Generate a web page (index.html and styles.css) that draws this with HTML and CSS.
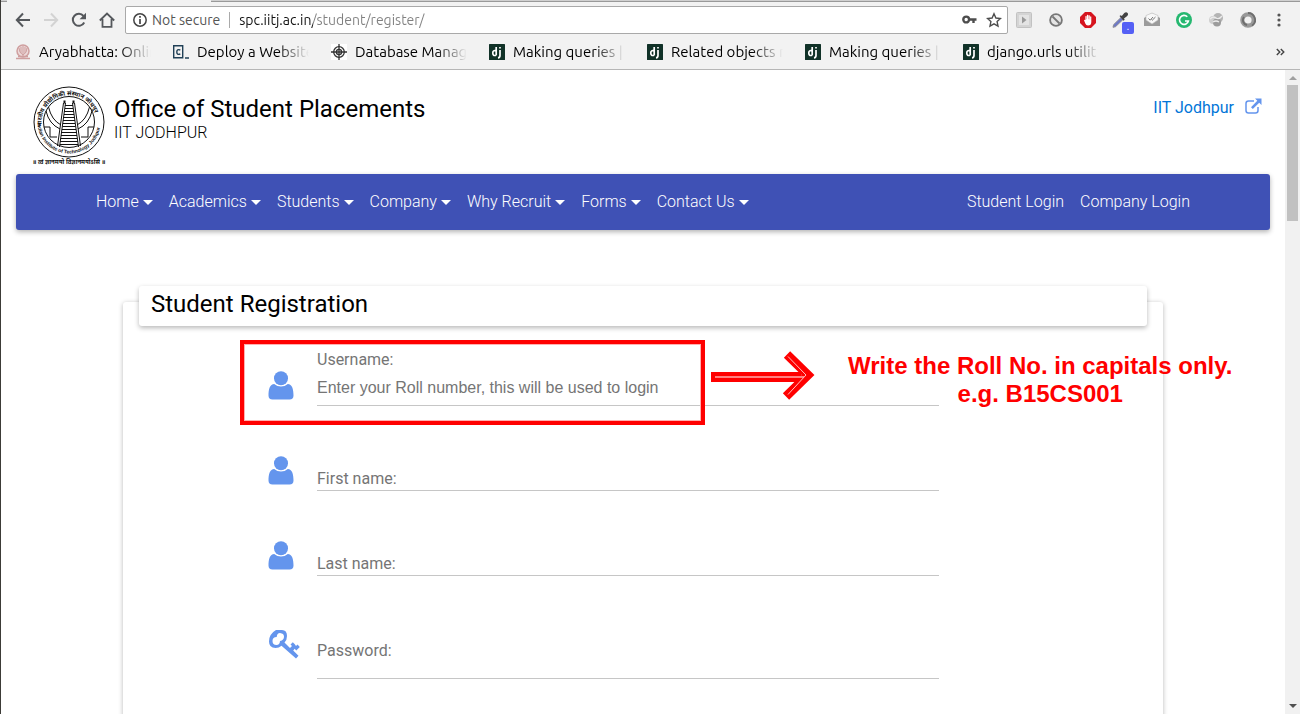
FILE: index.html
```html
<!DOCTYPE html>
<html lang="en">
<head>
<meta charset="utf-8">
<title>Student Registration</title>
<link rel="stylesheet" href="styles.css">
</head>
<body>
<svg class="defs" aria-hidden="true">
  <symbol id="user" viewBox="0 0 26 29"><circle cx="13" cy="7.3" r="7"/><path d="M6.2 13C2 13 .5 18 .5 24.500q0 4 4 4h17q4 0 4-4C25.500 18 24 13 19.800 13q-3 2.600-6.800 2.600T6.200 13z"/></symbol>
  <symbol id="dj" viewBox="0 0 16 16"><rect width="16" height="16" rx=".5" fill="#113228"/><path d="M7.200 3v8.300M7.200 6.800Q3.800 5.800 3.800 9t3.400 2.300M11 6v5.500q0 2.200-2 2.400M11 3v1.600" fill="none" stroke="#fff" stroke-width="1.700"/></symbol>
</svg>
<div class="browser">
  <header class="chrome">
    <div class="tab-edge"><span class="active-tab"></span></div>
    <div class="toolbar">
      <div class="nav-buttons">
        <button aria-label="Back"><svg width="16" height="16" viewBox="0 0 16 16"><path d="M15 8H2M8 1.500 1.800 8 8 14.500" fill="none" stroke="#55585c" stroke-width="2"/></svg></button>
        <button aria-label="Forward"><svg width="16" height="16" viewBox="0 0 16 16"><path d="M1 8h13M8 1.500 14.200 8 8 14.500" fill="none" stroke="#d3d3d3" stroke-width="2"/></svg></button>
        <button aria-label="Reload"><svg width="16" height="16" viewBox="0 0 16 16"><path d="M13.200 10.500A6 6 0 1 1 12.500 4" fill="none" stroke="#55585c" stroke-width="2"/><path d="M15 .8v6.400H8.600z" fill="#55585c"/></svg></button>
        <button aria-label="Home"><svg width="16" height="16" viewBox="0 0 16 16"><path d="M.8 8.500 8 1.500l7.200 7M3.500 7v7.800h9V7" fill="none" stroke="#55585c" stroke-width="1.800"/></svg></button>
      </div>
      <div class="omnibox">
        <svg width="14" height="14" viewBox="0 0 14 14"><circle cx="7" cy="7" r="6.200" fill="none" stroke="#444" stroke-width="1.500"/><path d="M7 3v1.700M7 6v5" stroke="#444" stroke-width="1.700"/></svg>
        <label class="security" for="address">Not secure</label>
        <input id="address" class="address" type="text" value="spc.iitj.ac.in/student/register/">
        <button aria-label="Saved password"><svg width="16" height="16" viewBox="0 0 16 16"><circle cx="5.200" cy="7.500" r="2.900" fill="none" stroke="#4d4d4d" stroke-width="2.400"/><path d="M8.500 7.500H15.500M12.500 7.500v3.400" fill="none" stroke="#4d4d4d" stroke-width="2.400"/></svg></button>
        <button aria-label="Bookmark this page"><svg width="16" height="16" viewBox="0 0 16 16"><path d="M8 1.800 9.900 6l4.600.5-3.400 3.100.9 4.500L8 11.800l-4 2.300.9-4.500L1.500 6.500 6.100 6z" fill="none" stroke="#4d4d4d" stroke-width="1.400"/></svg></button>
      </div>
      <div class="extensions">
        <button aria-label="Player"><svg width="16" height="16" viewBox="0 0 16 16"><rect x=".5" y=".5" width="15" height="15" rx="1" fill="#d4d4d4" stroke="#c2c2c2"/><rect x="3" y="3" width="10" height="10" fill="#e4e4e4"/><path d="M6 4.500 10.500 8 6 11.500z" fill="#999"/></svg></button>
        <button aria-label="Blocker"><svg width="16" height="16" viewBox="0 0 16 16"><circle cx="8" cy="8" r="5.900" fill="#e5e5e5" stroke="#777" stroke-width="1.800"/><path d="m4.500 4.500 7 7" stroke="#777" stroke-width="1.800"/></svg></button>
        <button aria-label="Ad blocker"><svg width="16" height="16" viewBox="0 0 16 16"><path d="M5 0h6l5 5v6l-5 5H5l-5-5V5z" fill="#d6151f"/><path d="M4 8.300q.5-1 1.400-.2V4.300q.6-.8 1.200 0V7.300h.3V3.100q.7-.8 1.300 0v4.200h.3V3.500q.7-.7 1.300 0v3.900h.3V4.700q.7-.7 1.200 0V10q0 3.600-3.300 3.600-2 0-2.700-2z" fill="#fff"/></svg></button>
        <button class="with-badge" aria-label="Colour picker"><svg width="16" height="16" viewBox="0 0 16 16"><path d="m9 5.500 2 2-7.500 7.200L1 15.300l.6-2.600z" fill="#6c78c8" stroke="#8b8b96"/><path d="m7.500 4 1.300-.8 1 .8 2.500-3q2-1.600 3.300.1 1 1.500-.4 3L12 6.500l.7 1.200-1.200 1z" fill="#434343"/></svg><span class="badge">.</span></button>
        <button aria-label="Mail tracker"><svg width="16" height="16" viewBox="0 0 16 16"><path d="M0 6 8 1l8 5v8H0z" fill="#9b9b9b"/><path d="M2 3.500 8 1l6 2.500V8l-6 4-6-4z" fill="#f8f8f8" stroke="#bbb" stroke-width=".6"/><path d="m4.500 6.500 1.700 1.700L9 5M7.500 7.500l.8.7L11.500 5" fill="none" stroke="#777"/></svg></button>
        <button aria-label="Grammar checker"><svg width="16" height="16" viewBox="0 0 16 16"><circle cx="8" cy="8" r="8" fill="#25b870"/><path d="M11.300 4.800A4.500 4.500 0 1 0 12.400 9H9" fill="none" stroke="#fff" stroke-width="1.600"/></svg></button>
        <button aria-label="Globe tool"><svg width="16" height="16" viewBox="0 0 16 16"><circle cx="10" cy="6" r="5" fill="#b4b4b4"/><circle cx="5" cy="8" r="4" fill="#cfcfcf"/><circle cx="9" cy="10.500" r="4" fill="#9c9c9c"/><path d="M2 7q3-3 6-1t6-2M5 10q3-2 6 0" fill="none" stroke="#ececec" stroke-width="1.300"/></svg></button>
        <button aria-label="Ring tool"><svg width="16" height="16" viewBox="0 0 16 16"><circle cx="8" cy="8" r="5.700" fill="none" stroke="#999" stroke-width="4.200"/><path d="M8 1a7 7 0 0 1 4 12.800M4 5a5 5 0 0 0 3 8" fill="none" stroke="#6e6e6e" stroke-width="1.900"/></svg></button>
        <button class="menu" aria-label="Menu"><svg width="16" height="16" viewBox="0 0 16 16"><g fill="#555"><circle cx="8" cy="3" r="1.600"/><circle cx="8" cy="8" r="1.600"/><circle cx="8" cy="13" r="1.600"/></g></svg></button>
      </div>
    </div>
    <nav class="bookmarks" aria-label="Bookmarks">
      <a href="#"><svg width="16" height="16" viewBox="0 0 16 16"><g fill="none" stroke="#cf9f9f"><circle cx="8" cy="7" r="6" stroke-width="1.500" fill="#ecd9d9"/><path d="M8 2v10M4 4q0 5 4 7 4-2 4-7M6 3v6M10 3v6"/><path d="M1 14.500h14M3 12.500h10" stroke-width="1.500"/></g></svg><span>Aryabhatta: Onlin</span></a>
      <a href="#"><svg width="16" height="16" viewBox="0 0 16 16"><path d="M.7 1.700h9v12h-9zM12 14h4" fill="none" stroke="#204056" stroke-width="1.400"/><path d="M7.300 6q-3.500-1.200-3.500 2t3.500 2" fill="none" stroke="#204056" stroke-width="1.400"/></svg><span>Deploy a Website</span></a>
      <a href="#"><svg width="16" height="16" viewBox="0 0 16 16"><rect width="16" height="16" fill="#fff"/><g fill="none" stroke="#333" stroke-width="1.300"><circle cx="8" cy="8" r="5.300"/><circle cx="8" cy="8" r="2.600"/><path d="M8 0v16M0 8h16"/></g></svg><span>Database Manag</span></a>
      <a href="#"><svg width="16" height="16"><use href="#dj"/></svg><span>Making queries |</span></a>
      <a href="#"><svg width="16" height="16"><use href="#dj"/></svg><span>Related objects r</span></a>
      <a href="#"><svg width="16" height="16"><use href="#dj"/></svg><span>Making queries |</span></a>
      <a href="#"><svg width="16" height="16"><use href="#dj"/></svg><span>django.urls utilit</span></a>
      <button class="more" aria-label="More bookmarks"><svg width="9" height="8" viewBox="0 0 9 8"><path d="m.8 1 3 3-3 3M4.800 1l3 3-3 3" fill="none" stroke="#444" stroke-width="1.400"/></svg></button>
    </nav>
  </header>

  <div class="viewport">
    <main class="page">
      <header class="site-header">
        <svg class="logo" width="74" height="84" viewBox="0 0 74 84" role="img" aria-label="Indian Institute of Technology Jodhpur">
          <defs><path id="arc-top" d="M10 44A27.500 27.500 0 1 1 64 44"/><path id="arc-bottom" d="M5.500 38A31.500 31.500 0 0 0 68.500 38"/></defs>
          <g fill="none" stroke="#111">
            <circle cx="37" cy="38" r="35"/><circle cx="37" cy="38" r="25.500"/>
            <path d="m31.500 19-6 43M33.500 19l-6 44M42.500 19l6 43M40.500 19l6 44" />
            <path d="M31.500 18h2M40.500 18h2" stroke-width="3"/>
            <path d="M33 21.500h8M33 24.500h8M32 27.500h10M32 30.500h10M31.500 33.500h11M31 36.500h12M31 39.500h12M30.500 42.500h13M30 45.500h14M29.500 48.500h15M29 51.500h16M28.500 54.500h17M28 57.500h18M28 60.500h18" stroke-width="1.100"/>
            <path d="M14 27q3 13 14 18M16.500 23q3 13 12.500 18M60 27q-3 13-14 18M57.500 23q-3 13-12.500 18M12 43h6v10h7M62 43h-6v10h-7"/>
          </g>
          <g class="logo-text">
            <text><textPath href="#arc-top" startOffset="1">भारतीय प्रौद्योगिकी संस्थान जोधपुर</textPath></text>
            <text class="english"><textPath href="#arc-bottom" startOffset="1">Indian Institute of Technology Jodhpur</textPath></text>
            <text class="motto" x="37" y="80" text-anchor="middle">॥ त्वं ज्ञानमयो विज्ञानमयोऽसि ॥</text>
          </g>
        </svg>
        <div class="site-name"><h1>Office of Student Placements</h1><p>IIT JODHPUR</p></div>
        <a class="institute" href="#">IIT Jodhpur<svg width="17" height="16" viewBox="0 0 17 16"><path d="M9 3H3.500Q1 3 1 5.500v7Q1 15 3.500 15h7q2.500 0 2.500-2.500V9" fill="none" stroke="#6495ed" stroke-width="1.500"/><path d="M10 .5h6.500V7l-2.300-2.200L7.800 11 6 9.300l6.300-6.500z" fill="#6495ed"/></svg></a>
      </header>
      <nav class="site-nav" aria-label="Main">
        <a class="drop" href="#">Home</a><a class="drop" href="#">Academics</a><a class="drop" href="#">Students</a><a class="drop" href="#">Company</a><a class="drop" href="#">Why Recruit</a><a class="drop" href="#">Forms</a><a class="drop" href="#">Contact Us</a>
        <a class="push" href="#">Student Login</a><a href="#">Company Login</a>
      </nav>
      <section class="card">
        <h2>Student Registration</h2>
        <form>
          <div class="row">
            <svg class="icon" width="26" height="29"><use href="#user"/></svg>
            <div class="field open"><label for="username">Username:</label><input id="username" type="text" placeholder="Enter your Roll number, this will be used to login"></div>
          </div>
          <div class="row">
            <svg class="icon" width="26" height="29"><use href="#user"/></svg>
            <div class="field"><label for="first">First name:</label><input id="first" type="text"></div>
          </div>
          <div class="row">
            <svg class="icon" width="26" height="29"><use href="#user"/></svg>
            <div class="field"><label for="last">Last name:</label><input id="last" type="text"></div>
          </div>
          <div class="row password">
            <svg class="icon" width="32" height="30" viewBox="0 0 32 30"><path fill-rule="evenodd" d="M8 1h6q5 0 5 6 0 4-2.500 6.500L22 19l2-2-1.500-1.500 2.300-2.300 2 2L28 17l1.500-1.400 2.300 2.300-3.500 3.500-1.600-1.600-1.500 1.600 5.300 5.300-2.500 2.800L13.500 16.700Q11 19 7.500 19 1 19 1 12.500 1 5 8 1zM12 4Q9 4 8.700 8 4.500 8 4.500 12t4 4q3.300 0 3.500-4Q16 11 16 7.700T12 4z" fill="#6495ed"/></svg>
            <div class="field"><label for="password">Password:</label><input id="password" type="password"></div>
          </div>
        </form>
        <div class="mark-box"></div>
        <svg class="mark-arrow" width="104" height="50" viewBox="0 0 104 50"><path d="M0 26h90" stroke="#f00" stroke-width="10"/><path d="m76 3.500 21 20.500-22 21.500" fill="none" stroke="#f00" stroke-width="9"/><path d="M4 26h89" stroke="#ff8080" stroke-width="2"/><path d="m77 5.500 18 18.500-18 19.500" fill="none" stroke="#ffc0c0"/></svg>
        <p class="mark-note">Write the Roll No. in capitals only.<br>e.g. B15CS001</p>
      </section>
    </main>
    <div class="scrollbar" aria-hidden="true"><span class="arrow up"></span><span class="thumb"></span><span class="arrow down"></span></div>
  </div>
</div>
</body>
</html>
```
FILE: styles.css
```css
* { box-sizing: border-box; }
body { margin: 0; font-family: Roboto, sans-serif; font-size: 16px; color: #000; background: #fff; }
h1, h2, p { margin: 0; font-weight: 400; }
a { color: inherit; text-decoration: none; }
button { display: block; padding: 0; border: 0; background: none; }
button svg, a svg { display: block; flex: none; }
.defs { position: absolute; width: 0; height: 0; }

.browser { display: flex; flex-direction: column; height: 100vh; overflow: hidden; border-left: 1px solid #3c3b37; }
.chrome { flex: none; background: #f2f2f2; border-bottom: 1px solid #b6b6b6; font-family: Ubuntu, "Noto Sans", sans-serif; font-size: 14px; }
.tab-edge { height: 2px; background: #d0d0d0; border-bottom: 1px solid #999; }
.active-tab { display: block; width: 204px; height: 2px; margin-left: 6px; background: #f2f2f2; }
.toolbar { display: flex; align-items: center; height: 36px; padding: 0 13px 0 14px; }
.nav-buttons { display: flex; gap: 12px; margin-right: 10px; }
.omnibox { display: flex; flex: 1; align-items: center; height: 28px; padding: 0 5px 0 7px; border: 1px solid #a9a9a9; border-radius: 2px; background: #fff; }
.security { margin-left: 5px; padding-right: 9px; border-right: 1px solid #aaa; line-height: 16px; color: #555; }
.address { flex: 1; min-width: 0; margin-left: 9px; padding: 0; border: 0; font: inherit; color: transparent; background: linear-gradient(90deg, #111 74px, #808080 74px); -webkit-background-clip: text; background-clip: text; }
.omnibox button + button { margin-left: 9px; }
.extensions { display: flex; gap: 16px; margin-left: 8px; }
.menu { margin-left: -1px; }
.with-badge { position: relative; }
.badge { position: absolute; left: 10px; top: 10px; width: 12px; height: 12px; border-radius: 2px; background: #5560f5; color: #fff; font-size: 10px; line-height: 10px; text-align: center; }
.bookmarks { display: flex; align-items: center; gap: 22px; height: 31px; padding: 0 15px 4px 14px; font-size: 15px; }
.bookmarks a { display: flex; align-items: center; gap: 8px; width: 136px; }
.bookmarks span { flex: 1; overflow: hidden; white-space: nowrap; line-height: 20px; -webkit-mask-image: linear-gradient(90deg, #000 72%, transparent 100%); mask-image: linear-gradient(90deg, #000 72%, transparent 100%); }
.more { margin-left: auto; }

.viewport { display: flex; flex: 1; min-height: 0; }
.page { flex: 1; min-width: 0; overflow: hidden; }
.scrollbar { display: flex; flex-direction: column; align-items: center; flex: none; width: 15px; padding: 6px 0; background: #f1f1f1; }
.thumb { width: 11px; height: 136px; margin-top: 5px; background: #c1c1c1; }
.arrow { border: 4px solid transparent; border-top-width: 0; border-bottom-width: 0; }
.up { border-bottom: 4px solid #a0a0a0; }
.down { margin-top: auto; border-top: 4px solid #505050; }

.site-header { display: flex; height: 104px; padding: 14px 23px 0 31px; }
.logo { margin-right: 8px; }
.logo-text { font: 700 6px "Liberation Sans", "Noto Sans Devanagari", sans-serif; fill: #111; }
.english { font-size: 5px; }
.motto { font-size: 6px; }
.site-name { padding-top: 9px; }
.site-name h1 { font-size: 24px; line-height: 32px; }
.site-name p { font-weight: 300; line-height: 16px; }
.institute { display: flex; gap: 11px; height: 19px; margin: 14px 0 0 auto; color: #0275d8; line-height: 19px; }

.site-nav { display: flex; align-items: center; height: 56px; margin: 0 15px; padding: 0 72px 2px; border-radius: 3px; background: #3f51b5; color: #fff; font-weight: 300; box-shadow: 0 2px 5px rgba(0, 0, 0, .3); }
.site-nav a { padding: 0 8px; white-space: nowrap; }
.drop::after { content: ""; display: inline-block; margin-left: 4px; border: 5px solid transparent; border-top-color: #fff; border-bottom: 0; vertical-align: 2px; }
.push { margin-left: auto; }

.card { position: relative; max-width: 1040px; min-height: 500px; margin: 72px auto 0; border-radius: 3px; box-shadow: 0 1px 5px rgba(0, 0, 0, .28); }
.card h2 { position: relative; top: -16px; margin: 0 16px -16px; height: 40px; padding-left: 12px; border-radius: 3px; background: #fff; font-size: 24px; line-height: 36px; box-shadow: 0 2px 5px rgba(0, 0, 0, .28); }
form { padding: 0 224px 0 145px; color: #757575; }
.row { display: flex; align-items: flex-end; height: 85px; }
.row:first-child { height: 80px; }
.row.password { height: 103px; }
.icon { flex: none; margin: 0 23px 6px 0; fill: #6495ed; }
.password .icon { margin: 0 17px 20px 0; }
.field { display: grid; flex: 1; border-bottom: 1px solid #c6c6c6; }
.field label { grid-area: 1 / 1; line-height: 22px; pointer-events: none; }
.field input { grid-area: 1 / 1; width: 100%; height: 22px; padding: 0; border: 0; outline: 0; background: none; font: 16px "Liberation Sans", sans-serif; }
.field input::placeholder { color: #757575; opacity: 1; }
.open input { grid-area: 2 / 1; height: 34px; padding-bottom: 0; }
.password .field input { height: 38px; }

.mark-box { position: absolute; left: 117px; top: 38px; width: 465px; height: 85px; border: 4px solid #f00; box-shadow: inset 0 0 0 1px #ffb0b0; }
.mark-arrow { position: absolute; left: 588px; top: 49px; }
.mark-note { position: absolute; left: 725px; top: 50px; color: #f00; font: 700 24px/28px "Liberation Sans", sans-serif; text-align: center; white-space: nowrap; }
```
